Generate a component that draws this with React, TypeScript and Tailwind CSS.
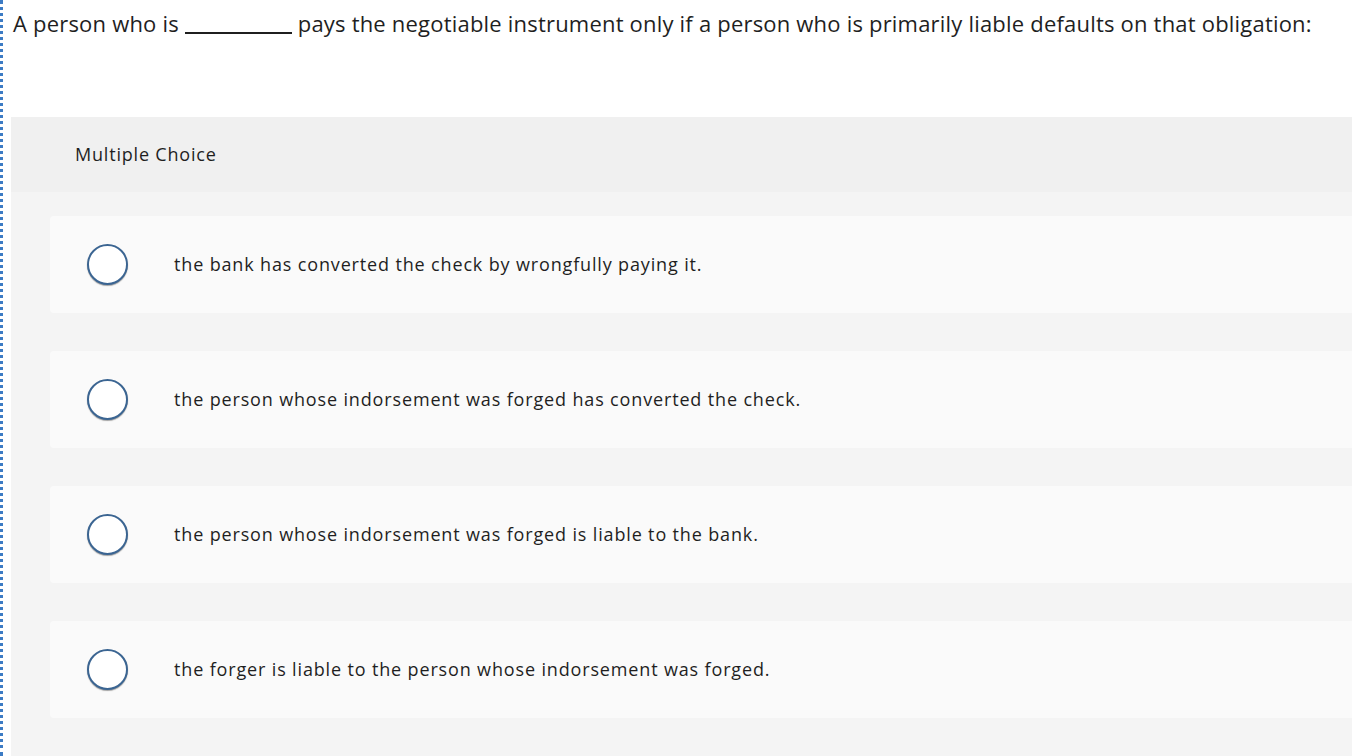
import React from "react";

const options = [
  "the bank has converted the check by wrongfully paying it.",
  "the person whose indorsement was forged has converted the check.",
  "the person whose indorsement was forged is liable to the bank.",
  "the forger is liable to the person whose indorsement was forged.",
];

function Radio() {
  return (
    <span className="block h-[41px] w-[41px] shrink-0 rounded-full border-2 border-[#3b6592] bg-white shadow-[0_1px_1px_rgba(0,0,0,0.35)]" />
  );
}

export default function App() {
  return (
    <div className="flex h-[756px] w-[1352px] overflow-hidden bg-white font-['Open_Sans',sans-serif] text-[#1f1f1f]">
      <div className="h-full w-[4px] shrink-0 border-l-[3px] border-dotted border-[#3c7bc4]" />
      <div className="flex min-w-0 flex-1 flex-col pl-[7px]">
        <p className="whitespace-nowrap pl-[2px] pt-[8px] text-[22px] leading-[30px] tracking-[0.2px]">
          A person who is{" "}
          <span className="inline-block w-[107px] translate-y-[2px] border-b-2 border-[#1f1f1f]" />{" "}
          pays the negotiable instrument only if a person who is primarily liable defaults on that obligation:
        </p>
        <div className="mt-[79px] flex flex-1 flex-col rounded-tl-[4px] bg-[#f4f4f4]">
          <div className="flex h-[75px] items-center bg-[#f0f0f0] pl-[64px] text-[18px] tracking-[0.8px]">
            Multiple Choice
          </div>
          <div className="flex flex-col gap-[38px] pl-[39px] pt-[24px]">
            {options.map((o) => (
              <div key={o} className="flex h-[97px] items-center rounded-l-[4px] bg-[#fafafa] pl-[37px]">
                <Radio />
                <span className="pl-[46px] text-[18px] tracking-[0.85px]">{o}</span>
              </div>
            ))}
          </div>
        </div>
      </div>
    </div>
  );
}
